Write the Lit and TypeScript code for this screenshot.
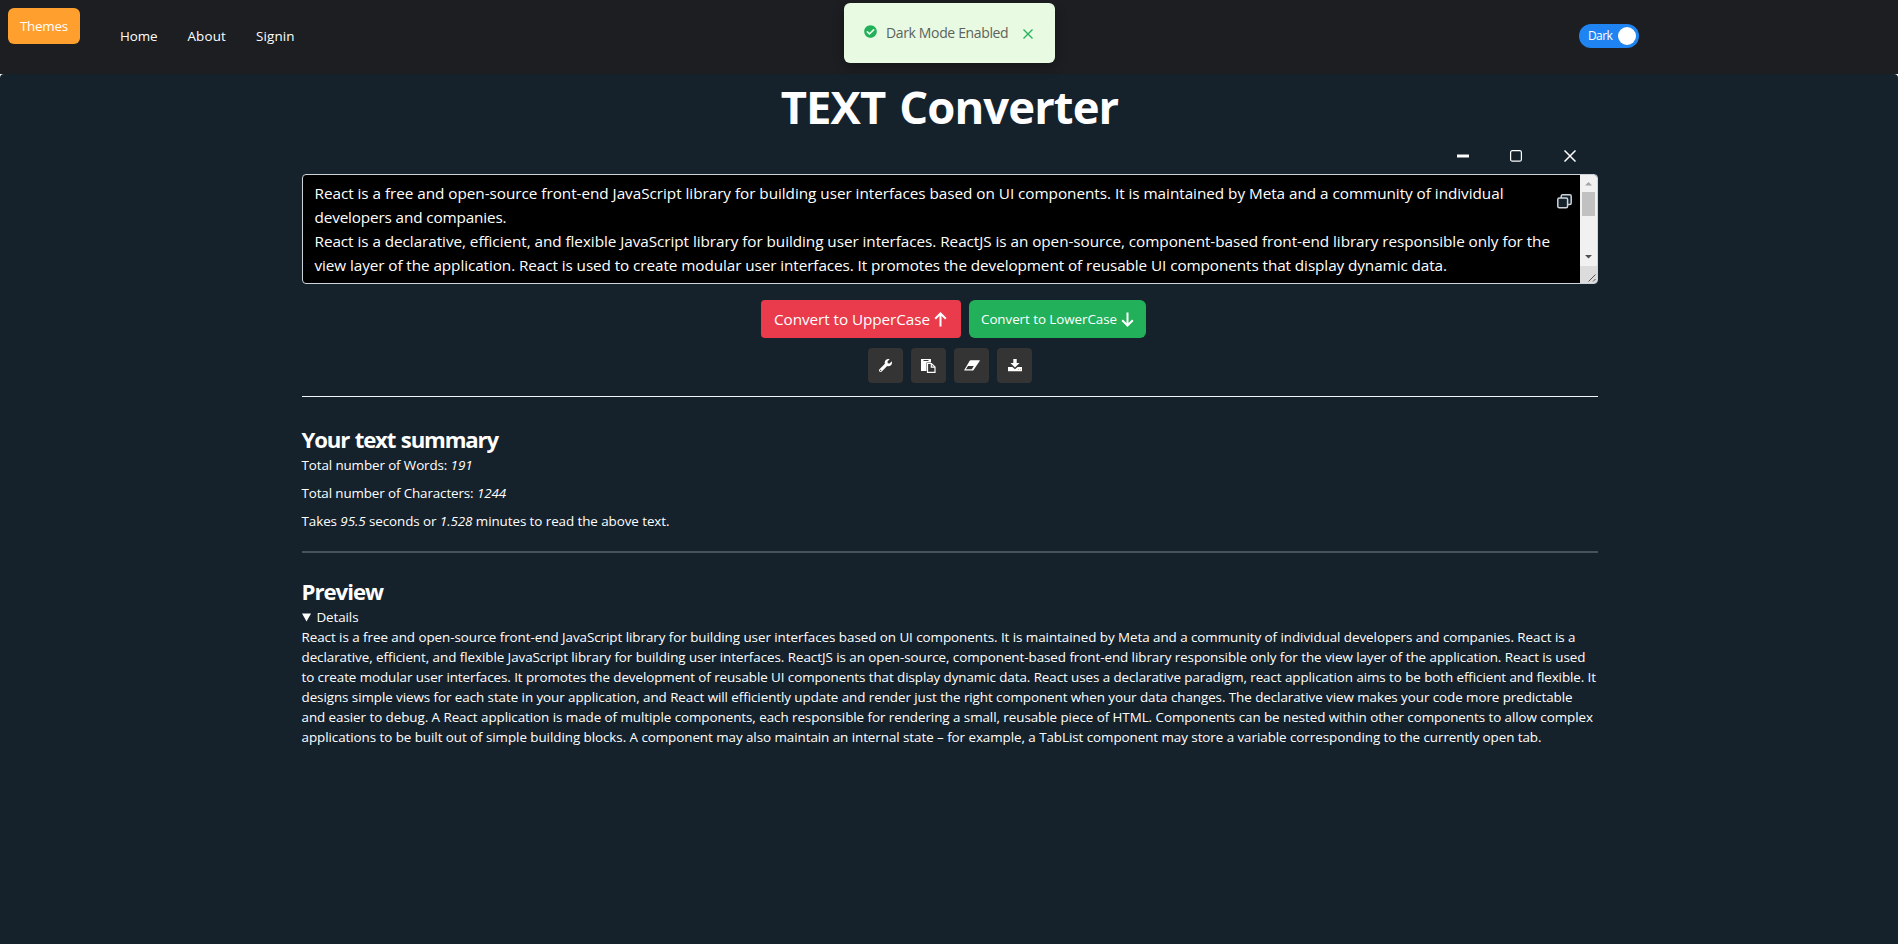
import { LitElement, html, css, svg } from "lit";
import { customElement, property } from "lit/decorators.js";

/** Inline run of text whose tracking is computed so that it spans a given width. */
@customElement("tracked-text")
class TrackedText extends LitElement {
  @property({ type: Number }) span = 0;

  static styles = css`
    :host {
      display: inline-block;
      white-space: nowrap;
    }
  `;

  firstUpdated() {
    const natural = this.getBoundingClientRect().width;
    const count = (this.textContent ?? "").trim().length;
    if (this.span && count > 1) {
      this.style.letterSpacing = `${((this.span - natural) / (count - 0.5)).toFixed(4)}px`;
    }
  }

  render() {
    return html`<slot></slot>`;
  }
}

const t = (span: number, content: unknown) =>
  html`<tracked-text span=${span}>${content}</tracked-text>`;

const EDITOR_LINES: [number, string][] = [
  [1189, "React is a free and open-source front-end JavaScript library for building user interfaces based on UI components. It is maintained by Meta and a community of individual"],
  [192, "developers and companies."],
  [1235.5, "React is a declarative, efficient, and flexible JavaScript library for building user interfaces. ReactJS is an open-source, component-based front-end library responsible only for the"],
  [1132.5, "view layer of the application. React is used to create modular user interfaces. It promotes the development of reusable UI components that display dynamic data."],
];

const PREVIEW_LINES: [number, string][] = [
  [1274, "React is a free and open-source front-end JavaScript library for building user interfaces based on UI components. It is maintained by Meta and a community of individual developers and companies. React is a"],
  [1284, "declarative, efficient, and flexible JavaScript library for building user interfaces. ReactJS is an open-source, component-based front-end library responsible only for the view layer of the application. React is used"],
  [1294.5, "to create modular user interfaces. It promotes the development of reusable UI components that display dynamic data. React uses a declarative paradigm, react application aims to be both efficient and flexible. It"],
  [1271, "designs simple views for each state in your application, and React will efficiently update and render just the right component when your data changes. The declarative view makes your code more predictable"],
  [1291.5, "and easier to debug. A React application is made of multiple components, each responsible for rendering a small, reusable piece of HTML. Components can be nested within other components to allow complex"],
  [1240, "applications to be built out of simple building blocks. A component may also maintain an internal state – for example, a TabList component may store a variable corresponding to the currently open tab."],
];

const icons = {
  check: svg`<path fill="currentColor" d="M504 256c0 136.967-111.033 248-248 248S8 392.967 8 256 119.033 8 256 8s248 111.033 248 248zM227.314 387.314l184-184c6.248-6.248 6.248-16.379 0-22.627l-22.627-22.627c-6.248-6.249-16.379-6.249-22.628 0L216 308.118l-70.059-70.059c-6.248-6.248-16.379-6.248-22.628 0l-22.627 22.627c-6.248 6.248-6.248 16.379 0 22.627l104 104c6.249 6.249 16.379 6.249 22.628.001z"/>`,
  wrench: svg`<path fill="currentColor" d="M507.73 109.1c-2.24-9.03-13.54-12.09-20.12-5.51l-74.36 74.36-67.88-11.31-11.31-67.88 74.36-74.36c6.62-6.62 3.43-17.9-5.66-20.16-47.38-11.74-99.55.91-136.58 37.93-39.64 39.64-50.55 97.1-34.05 147.2L18.74 402.76c-24.99 24.99-24.99 65.51 0 90.5 24.99 24.99 65.51 24.99 90.5 0l213.21-213.21c50.12 16.71 107.47 5.68 147.37-34.22 37.07-37.07 49.7-89.32 37.91-136.73zM64 472c-13.25 0-24-10.75-24-24 0-13.26 10.75-24 24-24s24 10.74 24 24c0 13.25-10.75 24-24 24z"/>`,
};

@customElement("app-root")
class AppRoot extends LitElement {
  static styles = css`
    :host {
      display: flex;
      flex-direction: column;
      height: 944px;
      overflow: hidden;
      background: #fff;
      color: #fff;
      font: 13.4px/20px "Open Sans", "Noto Sans", sans-serif;
    }
    * { box-sizing: border-box; }
    svg { display: block; flex: none; }
    header {
      position: relative;
      flex: none;
      display: flex;
      height: 74px;
      padding: 8px 259px 0 8px;
      background: #1c1e22;
    }
    .themes {
      width: 72px;
      height: 36px;
      padding: 8px 0 0 12px;
      border-radius: 6px;
      background: #ff9f2e;
    }
    nav { display: flex; gap: 30px; margin: 18px 0 0 40px; }
    .switch {
      display: flex;
      align-items: center;
      justify-content: space-between;
      width: 60px;
      height: 24px;
      margin: 16px 0 0 auto;
      padding: 0 3px 0 9px;
      border-radius: 12px;
      background: #1f84f2;
      font-size: 12px;
    }
    .knob { width: 18px; height: 18px; border-radius: 50%; background: #fff; }
    .toast {
      position: absolute;
      left: 844px;
      top: 3px;
      display: flex;
      width: 211px;
      height: 60px;
      padding: 20px 21px 0 20px;
      border-radius: 6px;
      background: #e8fae2;
      color: #5c625c;
      font-size: 14px;
      box-shadow: 0 4px 12px rgba(0, 0, 0, 0.3);
    }
    .toast .check { margin: 2px 9px 0 0; color: #22b15a; }
    .toast .x { margin: 6px 1px 0 auto; color: #22b15a; }

    main {
      flex: 1;
      padding-left: 301.5px;
      border-radius: 4px 4px 0 0;
      background: #15222c;
    }
    .container { width: 1296px; }
    h1 {
      margin: 0;
      height: 66px;
      font-size: 45.4px;
      font-weight: 700;
      line-height: 65px;
      text-align: center;
      word-spacing: 3px;
    }
    .window {
      display: flex;
      justify-content: flex-end;
      align-items: center;
      gap: 41px;
      height: 34px;
      padding: 0 21.5px 2px 0;
    }
    .window svg:last-child { margin-left: 1px; }
    .editor {
      position: relative;
      display: flex;
      height: 110px;
      border: 1px solid #ced4da;
      border-radius: 4px;
      background: #000;
      overflow: hidden;
      font-size: 15.3px;
      line-height: 24px;
    }
    .lines { flex: 1; min-width: 0; padding: 6px 0 6px 12px; }
    .line { display: flex; }
    .scroll {
      flex: none;
      display: flex;
      flex-direction: column;
      width: 17px;
      background: #f1f1f1;
    }
    .thumb { flex: none; width: 13px; height: 24px; margin: 0 2px; background: #c1c1c1; }
    .grip { margin-top: auto; background: #dcdcdc; }
    .copy { position: absolute; right: 24.5px; top: 19px; }

    .actions { display: flex; justify-content: center; gap: 8px; margin: 16px 0 0 8px; }
    .btn {
      display: flex;
      align-items: center;
      justify-content: space-between;
      height: 38px;
    }
    .upper { width: 200px; padding: 0 14px 0 13px; border-radius: 4px; background: #e93b4b; font-size: 15.3px; }
    .lower { width: 177px; padding: 0 12px; border-radius: 6px; background: #22b15a; }
    .tools { display: flex; justify-content: center; gap: 8px; margin: 10px 0 0 1px; }
    .tool {
      display: flex;
      align-items: center;
      justify-content: center;
      width: 35px;
      height: 35px;
      border-radius: 4px;
      background: #343434;
    }
    .rule { height: 1px; margin-top: 13px; background: #f4f5f6; }
    h2 {
      margin: 0;
      height: 31px;
      font-size: 22.2px;
      font-weight: 700;
      line-height: 32px;
      word-spacing: 1px;
    }
    .summary { padding-top: 27px; }
    .summary p { margin: 0 0 8px; height: 20px; }
    .rule2 { height: 2px; margin-top: 20px; background: #47525a; }
    .preview { padding-top: 23px; }
    .details { display: flex; align-items: center; gap: 6px; height: 20px; }
  `;

  render() {
    return html`
      <header>
        <div class="themes">${t(48, "Themes")}</div>
        <nav>
          <a>${t(37.5, "Home")}</a>
          <a>${t(38.5, "About")}</a>
          <a>${t(38.5, "Signin")}</a>
        </nav>
        <div class="switch">${t(24.5, "Dark")}<span class="knob"></span></div>
        <div class="toast">
          <svg class="check" width="13" height="13" viewBox="0 0 512 512">${icons.check}</svg>
          <span>${t(122.5, "Dark Mode Enabled")}</span>
          <svg class="x" width="10" height="10" viewBox="0 0 10 10">
            <path d="M.5.5l9 9M9.5.5l-9 9" stroke="currentColor" stroke-width="1.3" />
          </svg>
        </div>
      </header>
      <main>
        <div class="container">
          <h1>${t(338, "TEXT Converter")}</h1>
          <div class="window">
            <svg width="12" height="12" viewBox="0 0 12 12"><path d="M0 4.5h12v3H0z" fill="#fff" /></svg>
            <svg width="12" height="12" viewBox="0 0 12 12">
              <rect x=".6" y=".6" width="10.8" height="10.6" rx="1.8" fill="none" stroke="#fff" stroke-width="1.2" />
            </svg>
            <svg width="12" height="12" viewBox="0 0 12 12"><path d="M.5.5l11 11M11.5.5l-11 11" stroke="#fff" stroke-width="1.5" /></svg>
          </div>
          <div class="editor">
            <div class="lines">
              ${EDITOR_LINES.map(([w, s]) => html`<div class="line">${t(w, s)}</div>`)}
            </div>
            <div class="scroll">
              <svg width="17" height="17" viewBox="0 0 17 17"><path d="M5 10.5h7L8.5 7z" fill="#a3a3a3" /></svg>
              <div class="thumb"></div>
              <svg width="17" height="50" viewBox="0 0 17 50"><path d="M5 39h7l-3.500 3.500z" fill="#505050" /></svg>
              <svg class="grip" width="17" height="17" viewBox="0 0 17 17">
                <path d="M8.500 15.500l7-7M13 15.500l2.500-2.500" stroke="#555" stroke-width="1" />
              </svg>
            </div>
            <svg class="copy" width="15" height="15" viewBox="0 0 15 15" stroke="#ced4da" stroke-width="1.500" fill="#15222c">
              <rect x="4.200" y=".8" width="10" height="9.700" rx="1.500" />
              <rect x=".8" y="4" width="9.800" height="9.800" rx="1.500" />
            </svg>
          </div>
          <div class="actions">
            <div class="btn upper">
              ${t(156, "Convert to UpperCase")}
              <svg width="13" height="15" viewBox="0 0 13 15"><path d="M6.500 14.500V2M1.200 6.800L6.500 1.500l5.300 5.300" fill="none" stroke="#fff" stroke-width="2" /></svg>
            </div>
            <div class="btn lower">
              ${t(136, "Convert to LowerCase")}
              <svg width="13" height="15" viewBox="0 0 13 15"><path d="M6.500 .5V13M1.200 8.200l5.300 5.300 5.300-5.300" fill="none" stroke="#fff" stroke-width="2" /></svg>
            </div>
          </div>
          <div class="tools">
            <div class="tool">
              <svg width="13" height="13" viewBox="0 0 512 512">${icons.wrench}</svg>
            </div>
            <div class="tool">
              <svg width="15" height="14" viewBox="0 0 15 14">
                <path d="M0 0h10v3.500H5.500V12H0z" fill="#fff" />
                <path d="M2.500 1.500h5" stroke="#343434" stroke-width="1" />
                <path d="M6.500 4.500h4l3.500 3.500v5.400H6.500z" fill="#343434" stroke="#fff" stroke-width="1.200" />
                <path d="M10.300 4.500v3.700H14" fill="none" stroke="#fff" stroke-width="1.200" />
              </svg>
            </div>
            <div class="tool">
              <svg width="16" height="11" viewBox="0 0 16 11">
                <path d="M6.600 .3h8.700c.5 0 .7.400.4.800L9.600 10c-.3.400-.6.600-1 .6H.8c-.5 0-.7-.4-.4-.8L5.700.8c.2-.3.500-.5.900-.5z" fill="#fff" />
                <path d="M4 6h5.800L7.800 9.300H1.900z" fill="#343434" />
              </svg>
            </div>
            <div class="tool">
              <svg width="14" height="13" viewBox="0 0 14 13">
                <path d="M5.300 0h3.400v4h2.900L7 8.600 2.400 4h2.900z" fill="#fff" />
                <path d="M0 8h4.400L7 10.300 9.600 8H14v4.200H0z" fill="#fff" />
                <path d="M10 10.500h1M12 10.500h1" stroke="#c9a27a" stroke-width=".8" />
              </svg>
            </div>
          </div>
          <div class="rule"></div>
          <section class="summary">
            <h2>${t(197, "Your text summary")}</h2>
            <p>${t(171, html`Total number of Words: <em>191</em>`)}</p>
            <p>${t(204.5, html`Total number of Characters: <em>1244</em>`)}</p>
            <p>${t(368, html`Takes <em>95.5</em> seconds or <em>1.528</em> minutes to read the above text.`)}</p>
          </section>
          <div class="rule2"></div>
          <section class="preview">
            <h2>${t(82, "Preview")}</h2>
            <div class="details">
              <svg width="9" height="9" viewBox="0 0 9 9"><path d="M0 .5h9L4.500 8.500z" fill="#fff" /></svg>
              ${t(42, "Details")}
            </div>
            ${PREVIEW_LINES.map(([w, s]) => html`<div class="line">${t(w, s)}</div>`)}
          </section>
        </div>
      </main>
    `;
  }
}
